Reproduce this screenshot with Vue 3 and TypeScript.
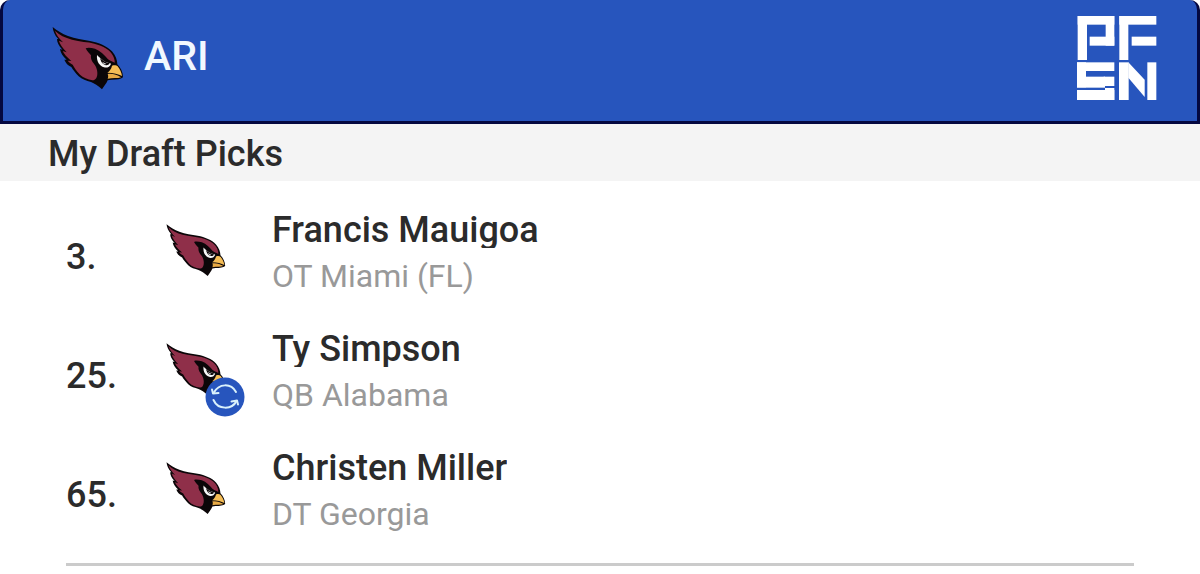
<script setup lang="ts">
import { defineComponent, h } from 'vue'

interface Pick {
  slot: number
  name: string
  detail: string
  traded: boolean
}

const team = 'ARI'

const picks: Pick[] = [
  { slot: 3, name: 'Francis Mauigoa', detail: 'OT Miami (FL)', traded: false },
  { slot: 25, name: 'Ty Simpson', detail: 'QB Alabama', traded: true },
  { slot: 65, name: 'Christen Miller', detail: 'DT Georgia', traded: false },
]

const shape = (d: string, fill: string) => h('path', { d, fill })

const TeamLogo = defineComponent({
  render: () =>
    h('svg', { viewBox: '36 30 216 192', role: 'img', 'aria-label': 'Cardinals' }, [
      // outline and face mask
      shape(
        'M38 33C52 45 66 53 84 60C106 69 128 70 150 75C176 80 201 90 216 106C227 119 232 133 232 145C242 155 249 169 249 184C242 190 231 191 214 191L203 193C199 203 192 211 186 220C174 208 163 202 153 198C139 194 126 190 116 181C107 171 99 162 94 153C84 149 77 141 73 131L80 131C69 122 62 111 60 99L67 101C56 90 51 78 51 69L55 69C44 58 39 45 38 33Z',
        '#0b0608',
      ),
      // plumage
      shape(
        'M45 44C58 57 75 65 96 71C121 78 143 77 163 83C190 90 211 102 219 119C223 127 225 135 224 140C216 136 210 134 204 130C194 117 181 104 165 98C153 95 143 94 137 97C142 107 148 112 153 118C151 130 158 139 166 149C173 161 174 177 169 186C166 191 162 193 157 193C143 190 129 185 120 176C109 165 103 155 98 146C91 142 86 138 83 134L94 135C80 123 71 113 68 105L80 109C67 95 59 84 57 74L69 79C56 66 49 56 45 44Z',
        '#8f2f49',
      ),
      // eye
      shape('M171 117C177 124 187 132 197 138C204 141 210 141 213 143C210 152 201 157 192 154C179 150 169 137 171 117Z', '#f7f7f7'),
      shape('M180 126C188 134 197 139 209 142C206 148 197 150 191 145C186 142 182 135 180 126Z', '#0b0608'),
      shape('M187 137C191 140 195 142 199 143C196 147 190 145 187 137Z', '#d8d8d8'),
      // beak
      shape('M216 149C222 147 229 147 233 151C240 160 245 171 246 180C235 174 221 170 202 170C209 165 214 158 216 149Z', '#f5bd55'),
      shape('M203 174C217 172 231 176 243 184C233 188 218 185 203 188C205 184 205 179 203 174Z', '#e8aa45'),
    ]),
})
</script>

<template>
  <main class="draft">
    <header class="team-bar">
      <TeamLogo class="team-logo" />
      <h1 class="team-name">{{ team }}</h1>
      <svg class="brand" viewBox="50 48 240 252" role="img" aria-label="PFSN" fill="#fff">
        <rect x="52" y="48" width="28" height="132" />
        <rect x="52" y="48" width="110" height="26" />
        <rect x="136" y="48" width="26" height="89" />
        <rect x="88" y="110" width="74" height="27" />
        <rect x="177" y="48" width="27" height="132" />
        <rect x="177" y="48" width="111" height="26" />
        <rect x="214" y="110" width="74" height="27" />
        <rect x="50" y="187" width="112" height="26" />
        <rect x="50" y="187" width="27" height="75" />
        <rect x="50" y="230" width="84" height="33" />
        <rect x="130" y="230" width="32" height="28" />
        <rect x="134" y="264" width="28" height="36" />
        <rect x="50" y="270" width="112" height="30" />
        <rect x="176" y="187" width="29" height="113" />
        <path d="M204 187L253 239V291L204 233Z" />
        <rect x="261" y="187" width="27" height="113" />
      </svg>
    </header>

    <h2 class="section-title">My Draft Picks</h2>

    <ol class="picks">
      <li v-for="pick in picks" :key="pick.slot" class="pick">
        <span class="slot">{{ pick.slot }}.</span>
        <span class="pick-team">
          <TeamLogo class="pick-logo" />
          <svg v-if="pick.traded" class="trade" viewBox="0 0 40 40" role="img" aria-label="Traded pick">
            <circle cx="20" cy="20" r="19.5" fill="#2755bd" />
            <g fill="none" stroke="#d9f1fb" stroke-width="2" stroke-linecap="round" stroke-linejoin="round">
              <path d="M31 15C26 6 14 6 8.500 16" />
              <path d="M7 12.500L8 16.500L13.500 16" />
              <path d="M8.500 23C13 33 27 33 31.500 24" />
              <path d="M33 27.500L32 23.500L26.500 24.500" />
            </g>
          </svg>
        </span>
        <div class="player">
          <div class="name">{{ pick.name }}</div>
          <div class="detail">{{ pick.detail }}</div>
        </div>
      </li>
    </ol>
  </main>
</template>

<style>
body {
  margin: 0;
  background: #fff;
}
</style>

<style scoped>
.draft {
  font-family: Roboto, "Liberation Sans", sans-serif;
  color: #2b2b2b;
}

.team-bar {
  display: flex;
  align-items: center;
  box-sizing: border-box;
  min-height: 124px;
  padding: 0 40px 6px 49px;
  border: 3px solid #040840;
  border-top: 0;
  border-radius: 10px 10px 0 0;
  background: #2755bd;
}

.team-logo {
  width: 72px;
  height: 64px;
}

.team-name {
  margin: 0 auto 0 20px;
  padding-bottom: 4px;
  font-size: 41px;
  line-height: 48px;
  font-weight: 500;
  color: #f1f8ff;
}

.brand {
  width: 80px;
  height: 84px;
}

.section-title {
  margin: 0;
  padding: 10px 48px 7px;
  background: #f4f4f4;
  font-size: 36px;
  line-height: 40px;
  font-weight: 500;
}

.picks {
  list-style: none;
  margin: 0 66px;
  padding: 12px 0 13px;
  border-bottom: 3px solid #cbcbcb;
}

.pick {
  display: flex;
  align-items: center;
  height: 119px;
}

.slot {
  width: 100px;
  padding-top: 8px;
  font-size: 36px;
  line-height: 40px;
  font-weight: 500;
}

.pick-team {
  position: relative;
  width: 106px;
  height: 60px;
}

.pick-logo {
  display: block;
  width: 60px;
  height: 54px;
}

.trade {
  position: absolute;
  left: 39px;
  top: 35px;
  width: 40px;
  height: 40px;
}

.name {
  overflow: hidden;
  font-size: 36px;
  line-height: 36px;
  font-weight: 500;
}

.detail {
  margin-top: 10px;
  font-size: 32px;
  line-height: 36px;
  color: #999;
}
</style>
